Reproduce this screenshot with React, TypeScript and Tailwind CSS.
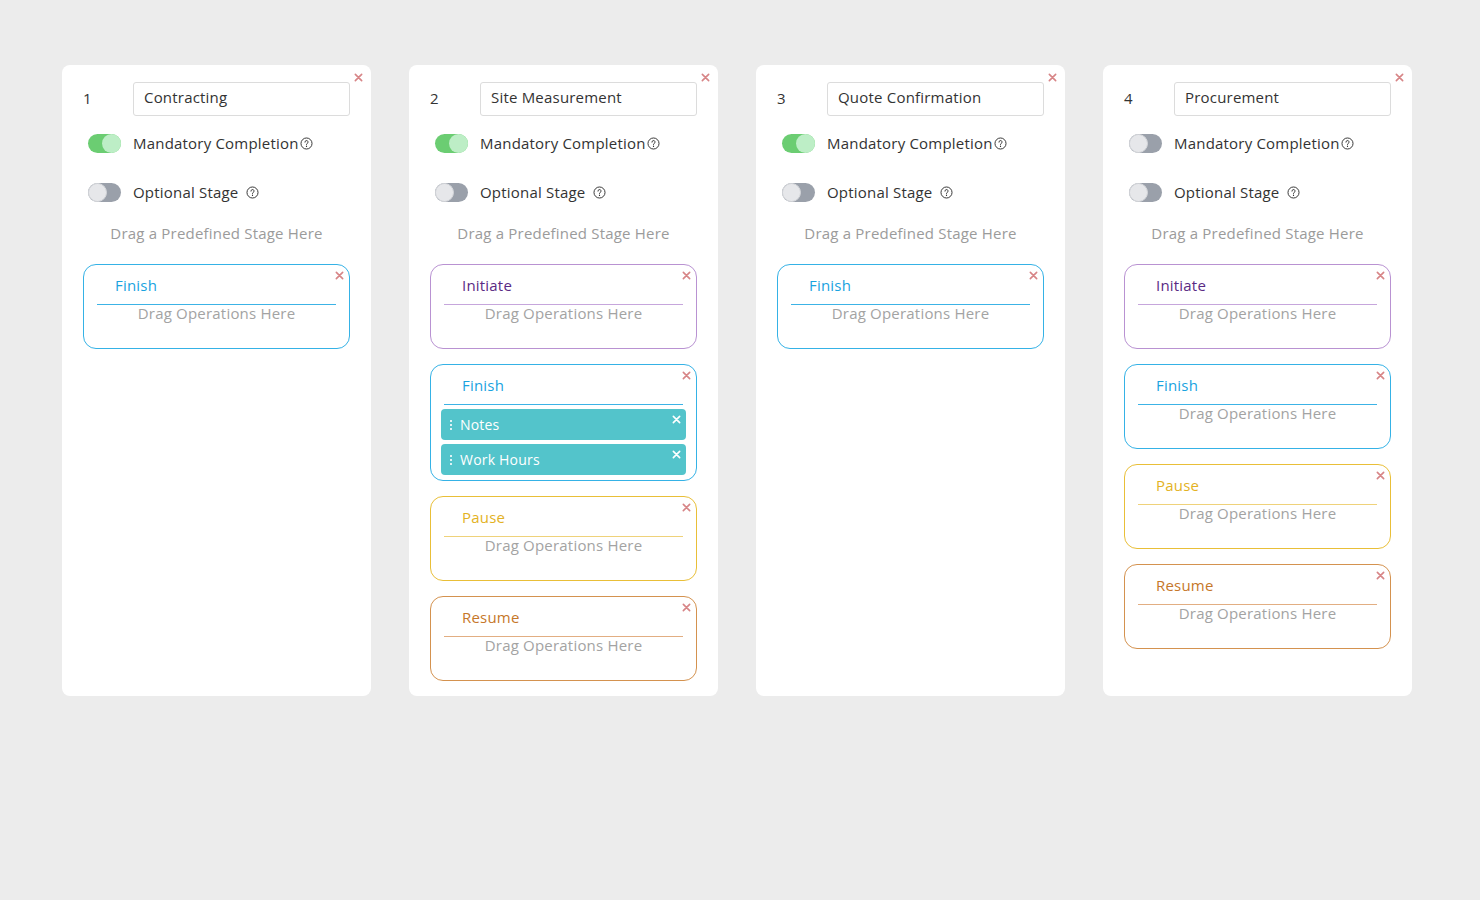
import React from 'react';

type StageKind = 'Initiate' | 'Finish' | 'Pause' | 'Resume';

interface Stage {
  kind: StageKind;
  ops?: string[];
}

interface Column {
  num: number;
  name: string;
  mandatory: boolean;
  stages: Stage[];
}

const columns: Column[] = [
  { num: 1, name: 'Contracting', mandatory: true, stages: [{ kind: 'Finish' }] },
  {
    num: 2,
    name: 'Site Measurement',
    mandatory: true,
    stages: [
      { kind: 'Initiate' },
      { kind: 'Finish', ops: ['Notes', 'Work Hours'] },
      { kind: 'Pause' },
      { kind: 'Resume' },
    ],
  },
  { num: 3, name: 'Quote Confirmation', mandatory: true, stages: [{ kind: 'Finish' }] },
  {
    num: 4,
    name: 'Procurement',
    mandatory: false,
    stages: [{ kind: 'Initiate' }, { kind: 'Finish' }, { kind: 'Pause' }, { kind: 'Resume' }],
  },
];

const styles: Record<StageKind, { box: string; title: string; line: string }> = {
  Initiate: { box: 'border-[#b992d2]', title: 'text-[#5a2a84]', line: 'border-[#c6a6dc]' },
  Finish: { box: 'border-[#35b2e6]', title: 'text-[#1aa3df]', line: 'border-[#3cb3e6]' },
  Pause: { box: 'border-[#e9bf38]', title: 'text-[#e3b21f]', line: 'border-[#efd27a]' },
  Resume: { box: 'border-[#d4924f]', title: 'text-[#c6772a]', line: 'border-[#e2ae82]' },
};

function CloseX({ className = '' }: { className?: string }) {
  return (
    <svg viewBox="0 0 10 10" className={`w-[9px] h-[9px] ${className}`}>
      <path d="M1.5 1.5 L8.5 8.5 M8.5 1.5 L1.5 8.5" stroke="currentColor" strokeWidth="1.8" strokeLinecap="round" />
    </svg>
  );
}

function Help() {
  return (
    <svg viewBox="0 0 16 16" className="w-[13px] h-[13px] text-[#333]">
      <circle cx="8" cy="8" r="6.8" fill="none" stroke="currentColor" strokeWidth="1.2" />
      <path d="M6.1 6.3a1.9 1.9 0 1 1 2.7 1.7c-.6.3-.8.6-.8 1.3v.4" fill="none" stroke="currentColor" strokeWidth="1.2" strokeLinecap="round" />
      <circle cx="8" cy="11.6" r="0.75" fill="currentColor" />
    </svg>
  );
}

function Toggle({ on }: { on: boolean }) {
  return (
    <div
      className={`w-[33px] h-[19px] rounded-full flex items-center shrink-0 ${
        on ? 'bg-[#6bcd72] justify-end' : 'bg-[#9aa0aa] justify-start'
      }`}
    >
      <div
        className={`w-[19px] h-[19px] rounded-full ${
          on ? 'bg-[#bdeec6]' : 'bg-[#e6e7ea] border border-[#d4d6da]'
        }`}
      />
    </div>
  );
}

function StageBox({ stage }: { stage: Stage }) {
  const s = styles[stage.kind];
  return (
    <div className={`relative border rounded-[13px] px-[13px] ${stage.ops ? 'pb-[5px]' : 'pb-[27px]'} ${s.box}`}>
      <button className="absolute right-[5px] top-[6px] text-[#d78587]">
        <CloseX />
      </button>
      <div className={`pt-[10px] pb-[9px] pl-[18px] text-[15px] leading-[20px] tracking-[0.2px] ${s.title}`}>
        {stage.kind}
      </div>
      <div className={`border-t ${s.line}`} />
      {stage.ops ? (
        <div className="-mx-[3px] mt-[4px] flex flex-col gap-[4px]">
          {stage.ops.map((op) => (
            <div
              key={op}
              className="relative h-[31px] rounded-[4px] bg-[#53c4cb] flex items-center pl-[9px] text-white text-[14px] tracking-[0.2px]"
            >
              <span className="w-[2px] h-[10px] mr-[8px] border-l-2 border-dotted border-white/80" />
              {op}
              <CloseX className="absolute right-[5px] top-[6px] text-white" />
            </div>
          ))}
        </div>
      ) : (
        <div className="text-center text-[15px] leading-[16px] text-[#a3a3a3] tracking-[0.2px]">
          Drag Operations Here
        </div>
      )}
    </div>
  );
}

function StageColumn({ col }: { col: Column }) {
  return (
    <div className="relative w-[309px] bg-white rounded-[8px] px-[21px] pt-[17px] pb-[15px]">
      <button className="absolute right-[8px] top-[8px] text-[#d78587]">
        <CloseX />
      </button>
      <div className="flex items-center">
        <span className="w-[50px] text-[15px] leading-[20px] -mt-[3px] text-[#333]">{col.num}</span>
        <div className="flex-1 h-[34px] border border-[#dcdcdc] rounded-[3px] flex items-center px-[10px] pb-[3px] text-[15px] text-[#333] tracking-[0.2px]">
          {col.name}
        </div>
      </div>
      <div className="flex items-center h-[20px] mt-[17px] pl-[5px] gap-[12px]">
        <Toggle on={col.mandatory} />
        <span className="text-[15px] leading-[20px] text-[#333] tracking-[0.2px]">Mandatory Completion</span>
        <span className="-ml-[11px] flex">
          <Help />
        </span>
      </div>
      <div className="flex items-center h-[20px] mt-[29px] pl-[5px] gap-[12px]">
        <Toggle on={false} />
        <span className="text-[15px] leading-[20px] text-[#333] tracking-[0.2px]">Optional Stage</span>
        <span className="-ml-[5px] flex">
          <Help />
        </span>
      </div>
      <div className="mt-[21px] text-center text-[15px] leading-[20px] text-[#9b9b9b] tracking-[0.2px]">
        Drag a Predefined Stage Here
      </div>
      <div className="mt-[21px] flex flex-col gap-[15px]">
        {col.stages.map((s, i) => (
          <StageBox key={i} stage={s} />
        ))}
      </div>
    </div>
  );
}

export default function App() {
  return (
    <div className="min-h-[900px] w-full bg-[#ececec] font-['Open_Sans',sans-serif]">
      <div className="flex items-stretch gap-[38px] pl-[62px] pt-[65px]">
        {columns.map((c) => (
          <div key={c.num} className="flex">
            <StageColumn col={c} />
          </div>
        ))}
      </div>
    </div>
  );
}
